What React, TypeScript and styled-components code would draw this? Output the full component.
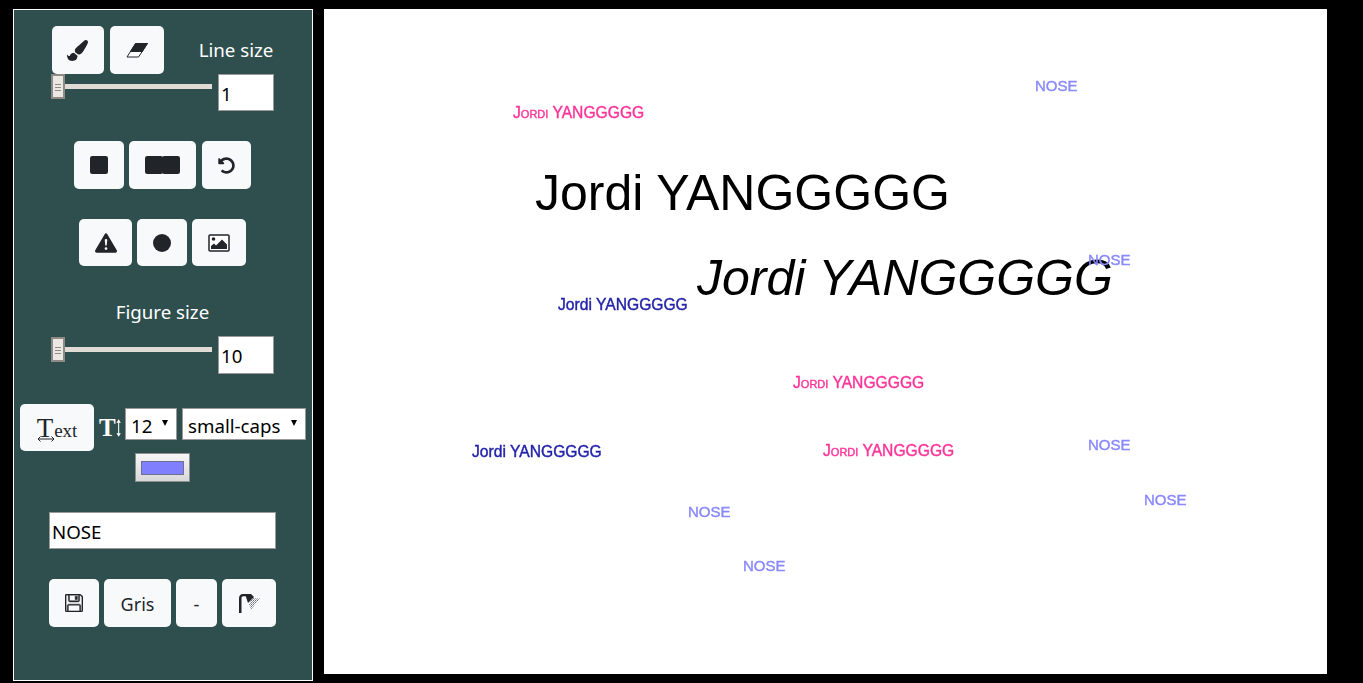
import React from 'react'
import styled, { createGlobalStyle } from 'styled-components'
import { FaUndoAlt, FaPaintBrush } from 'react-icons/fa'
import {
  BsSquareFill,
  BsExclamationTriangleFill,
  BsCircleFill,
  BsFloppy,
} from 'react-icons/bs'

const UI_FONT = `"Noto Sans", "Open Sans", sans-serif`

const GlobalStyle = createGlobalStyle`
  html, body {
    margin: 0;
    height: 100%;
    background: #000;
    overflow: hidden;
  }
  * { box-sizing: border-box; }
`

const Page = styled.div`
  display: flex;
  align-items: flex-start;
  gap: 11px;
  padding: 9px 0 0 13px;
  font-family: ${UI_FONT};
`

const Panel = styled.aside`
  display: flex;
  flex-direction: column;
  align-items: center;
  width: 300px;
  height: 672px;
  padding: 16px 1px 0 0;
  background: #2f4f4f;
  border: 1px solid #fff;
  color: #fff;
`

const Row = styled.div<{ $gap?: number; $top?: number }>`
  display: flex;
  align-items: center;
  justify-content: center;
  gap: ${(p) => p.$gap ?? 5}px;
  margin-top: ${(p) => p.$top ?? 0}px;
`

const SliderRow = styled(Row)`
  align-items: flex-start;
`

const TextRow = styled(Row)`
  padding-left: 1px;
`

const Button = styled.button<{ $w: number; $h?: number; $left?: number }>`
  display: flex;
  align-items: center;
  justify-content: center;
  width: ${(p) => p.$w}px;
  height: ${(p) => p.$h ?? 48}px;
  margin-left: ${(p) => p.$left ?? 0}px;
  padding: 0;
  border: none;
  border-radius: 5px;
  background: #f8f9fa;
  color: #212529;
  font-family: ${UI_FONT};
  font-size: 18px;
`

const LabelButton = styled(Button)`
  padding-top: 2px;
`

const TwinSquares = styled.span`
  display: flex;

  svg + svg {
    margin-left: -1px;
  }
`

const LineLabel = styled.span`
  margin: -2px 0 0 29px;
  font-size: 18.7px;
`

const FigureLabel = styled.div`
  margin-top: 33px;
  font-size: 18.7px;
  line-height: 26px;
`

const Slider = styled.input<{ $top?: number }>`
  appearance: none;
  width: 161px;
  height: 25px;
  margin: ${(p) => p.$top ?? 0}px 0 0;
  background: transparent;

  &::-webkit-slider-runnable-track {
    height: 5px;
    background: #e0dcd5;
  }
  &::-webkit-slider-thumb {
    appearance: none;
    width: 14px;
    height: 25px;
    margin-top: -10px;
    border: 2px solid #8f8a84;
    background:
      linear-gradient(#8f8a84, #8f8a84) center 8px / 6px 1px no-repeat,
      linear-gradient(#8f8a84, #8f8a84) center 11px / 6px 1px no-repeat,
      linear-gradient(#8f8a84, #8f8a84) center 14px / 6px 1px no-repeat,
      #ebe7e3;
  }
`

const SizeInput = styled.input<{ $h: number; $pad: number }>`
  width: 56px;
  height: ${(p) => p.$h}px;
  padding: ${(p) => p.$pad}px 2px 0;
  border: 1px solid #999;
  background: #fff;
  color: #000;
  font-family: ${UI_FONT};
  font-size: 18.7px;
`

const TextIcon = styled.span`
  position: relative;
  display: inline-flex;
  align-items: baseline;
  padding-top: 1px;
  font-family: "Liberation Serif", serif;
  font-size: 19px;
  color: #212529;

  b {
    margin-right: 1px;
    font-weight: 400;
    font-size: 27px;
  }

  svg {
    position: absolute;
    left: 0;
    bottom: 2px;
  }
`

const HeightIcon = styled.span`
  display: inline-flex;
  align-items: center;
  width: 22px;
  margin-right: -1px;
  color: #fff;
  font-family: "Liberation Serif", serif;
  font-weight: 700;
  font-size: 25px;
  line-height: 1;
`

const SelectBox = styled.div<{ $w: number }>`
  position: relative;
  width: ${(p) => p.$w}px;
  height: 32px;
  margin-bottom: 8px;

  &::after {
    content: '';
    position: absolute;
    right: 9px;
    top: 12px;
    border-left: 3.500px solid transparent;
    border-right: 3.500px solid transparent;
    border-top: 6px solid #000;
    pointer-events: none;
  }
`

const Select = styled.select`
  appearance: none;
  width: 100%;
  height: 100%;
  padding: 4px 0 0 5px;
  border: 1px solid #999;
  border-radius: 0;
  background: #fff;
  color: #000;
  font-family: ${UI_FONT};
  font-size: 18.7px;
`

const ColorButton = styled.button`
  display: flex;
  align-items: center;
  justify-content: center;
  width: 55px;
  height: 29px;
  margin-top: 2px;
  padding: 0;
  border: 1px solid #8f8f8f;
  background: linear-gradient(#f6f6f6, #d8d8d8);
`

const Swatch = styled.span`
  width: 43px;
  height: 14px;
  background: #8080ff;
  border: 1px solid #6f6f8f;
`

const NameInput = styled.input`
  width: 227px;
  height: 37px;
  margin-top: 30px;
  padding: 2px 2px 0;
  border: 1px solid #999;
  background: #fff;
  color: #000;
  font-family: ${UI_FONT};
  font-size: 18.7px;
`

const Canvas = styled.main`
  position: relative;
  width: 1003px;
  height: 665px;
  background: #fff;
  overflow: hidden;
`

const Stamp = styled.span<{
  $x: number
  $y: number
  $size: number
  $color: string
  $caps?: boolean
  $italic?: boolean
}>`
  position: absolute;
  left: ${(p) => p.$x - 324}px;
  top: ${(p) => p.$y - 9}px;
  transform: translateY(-50%);
  filter: blur(0.35px);
  font-family: "Liberation Sans", Arial, sans-serif;
  font-size: ${(p) => p.$size}px;
  line-height: 1;
  white-space: nowrap;
  color: ${(p) => p.$color};
  -webkit-text-stroke: ${(p) => (p.$size > 30 ? 0 : 0.4)}px ${(p) => p.$color};
  font-variant: ${(p) => (p.$caps ? 'small-caps' : 'normal')};
  font-style: ${(p) => (p.$italic ? 'italic' : 'normal')};
`

const PINK = '#ff3399'
const NAVY = '#2222aa'
const LILAC = '#8888ff'
const NAME = 'Jordi YANGGGGG'

const stamps = [
  { x: 513, y: 113, size: 15.65, color: PINK, caps: true, text: NAME },
  { x: 535, y: 193, size: 50, color: '#000', text: NAME },
  { x: 697, y: 278, size: 50, color: '#000', italic: true, text: NAME },
  { x: 558, y: 305, size: 15.65, color: NAVY, text: NAME },
  { x: 793, y: 383, size: 15.65, color: PINK, caps: true, text: NAME },
  { x: 472, y: 452, size: 15.65, color: NAVY, text: NAME },
  { x: 823, y: 451, size: 15.65, color: PINK, caps: true, text: NAME },
  { x: 1035, y: 85, size: 15, color: LILAC, text: 'NOSE' },
  { x: 1088, y: 259, size: 15, color: LILAC, text: 'NOSE' },
  { x: 1088, y: 444, size: 15, color: LILAC, text: 'NOSE' },
  { x: 1144, y: 499, size: 15, color: LILAC, text: 'NOSE' },
  { x: 688, y: 511, size: 15, color: LILAC, text: 'NOSE' },
  { x: 743, y: 565, size: 15, color: LILAC, text: 'NOSE' },
]

const EraserIcon = () => (
  <svg width="22" height="15" viewBox="0 0 22 15">
    <path d="M9.500.500h12l-9 13.500H1z" fill="#fff" stroke="#212529" />
    <path d="M9.500 0H22l-5.500 9H3.800z" fill="#212529" />
  </svg>
)

const PictureIcon = () => (
  <svg width="22" height="18" viewBox="0 0 22 18">
    <rect x="1" y="1" width="20" height="16" rx="1" fill="#fff" stroke="#212529" strokeWidth="1.500" />
    <circle cx="5.500" cy="5" r="1.800" fill="#212529" />
    <path d="M3 15v-3l3-2.500 2 2L14 5.500l5 5V15z" fill="#212529" />
  </svg>
)

const ShowerIcon = () => (
  <svg width="24" height="22" viewBox="0 0 24 22">
    <defs>
      <pattern id="spray" width="2" height="2" patternUnits="userSpaceOnUse">
        <rect width="1" height="1" fill="#6f7479" />
        <rect x="1" y="1" width="1" height="1" fill="#9aa0a5" />
      </pattern>
    </defs>
    <path d="M2 21V6.500C2 3.500 3.500 2 6 2h6v2.200H6.500C5 4.200 4.500 5 4.500 6.500V21z" fill="#212529" />
    <path d="M8 2h6l3 3-6 6z" fill="#212529" />
    <path d="M15 6l8 .500-9 11-2-5z" fill="url(#spray)" />
  </svg>
)

const TextArrow = () => (
  <svg width="18" height="6" viewBox="0 0 18 6">
    <path d="M1 3h16M3.500.500 1 3l2.500 2.500M14.500.500 17 3l-2.500 2.500" stroke="#212529" fill="none" />
  </svg>
)

const UpDownArrow = () => (
  <svg width="6" height="20" viewBox="0 0 6 20">
    <path d="M3 2v16" stroke="#fff" strokeWidth="1.200" />
    <path d="M0.500 4 3 0l2.500 4zM0.500 16 3 20l2.500-4z" fill="#fff" />
  </svg>
)

export default function App() {
  return (
    <>
      <GlobalStyle />
      <Page>
        <Panel>
          <Row $gap={6}>
            <Button $w={52}><FaPaintBrush size={21} /></Button>
            <Button $w={54}><EraserIcon /></Button>
            <LineLabel>Line size</LineLabel>
          </Row>
          <SliderRow $gap={6}>
            <Slider type="range" min={1} max={100} defaultValue={1} />
            <SizeInput $h={37} $pad={2} defaultValue="1" />
          </SliderRow>
          <Row $top={30}>
            <Button $w={50}><BsSquareFill size={18} /></Button>
            <Button $w={67}>
              <TwinSquares>
                <BsSquareFill size={18} />
                <BsSquareFill size={18} />
              </TwinSquares>
            </Button>
            <Button $w={49} $left={1}><FaUndoAlt size={17} /></Button>
          </Row>
          <Row $top={30}>
            <Button $w={53} $h={47}><BsExclamationTriangleFill size={22} /></Button>
            <Button $w={50} $h={47}><BsCircleFill size={18} /></Button>
            <Button $w={54} $h={47}><PictureIcon /></Button>
          </Row>
          <FigureLabel>Figure size</FigureLabel>
          <SliderRow $gap={6} $top={11}>
            <Slider $top={1} type="range" min={1} max={100} defaultValue={1} />
            <SizeInput $h={38} $pad={0} defaultValue="10" />
          </SliderRow>
          <TextRow $top={30}>
            <Button $w={74} $h={47}>
              <TextIcon><b>T</b>ext<TextArrow /></TextIcon>
            </Button>
            <HeightIcon>T<UpDownArrow /></HeightIcon>
            <SelectBox $w={52}>
              <Select defaultValue="12"><option>12</option></Select>
            </SelectBox>
            <SelectBox $w={124}>
              <Select defaultValue="small-caps"><option>small-caps</option></Select>
            </SelectBox>
          </TextRow>
          <ColorButton><Swatch /></ColorButton>
          <NameInput defaultValue="NOSE" />
          <Row $top={30}>
            <Button $w={50}><BsFloppy size={18} stroke="currentColor" strokeWidth={0.4} /></Button>
            <LabelButton $w={67}>Gris</LabelButton>
            <LabelButton $w={41}>-</LabelButton>
            <Button $w={54}><ShowerIcon /></Button>
          </Row>
        </Panel>
        <Canvas>
          {stamps.map((s, i) => (
            <Stamp key={i} $x={s.x} $y={s.y} $size={s.size} $color={s.color} $caps={s.caps} $italic={s.italic}>
              {s.text}
            </Stamp>
          ))}
        </Canvas>
      </Page>
    </>
  )
}
